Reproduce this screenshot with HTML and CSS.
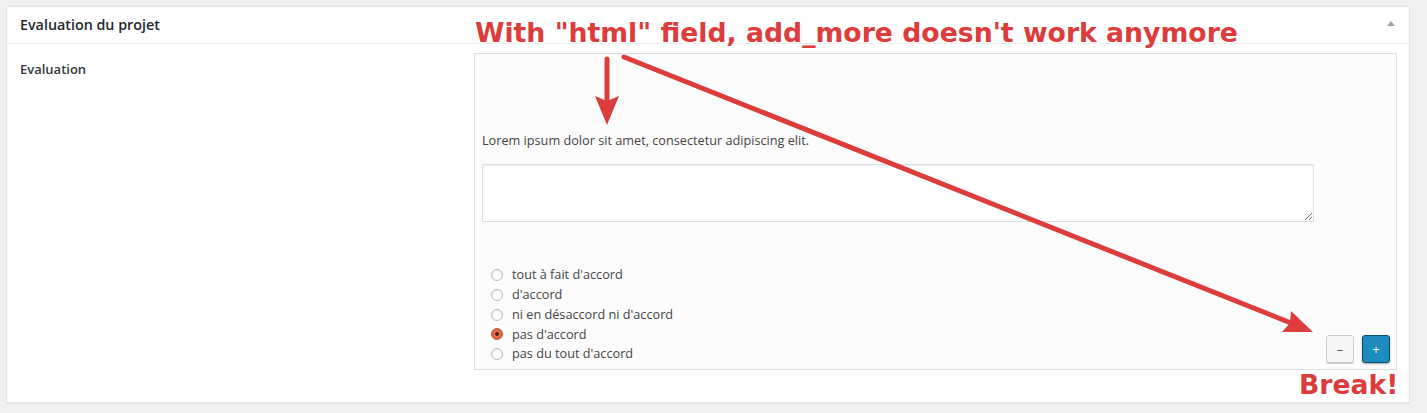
FILE: index.html
```html
<!DOCTYPE html>
<html lang="fr">
<head>
<meta charset="utf-8">
<title>Evaluation du projet</title>
<link rel="stylesheet" href="styles.css">
</head>
<body>
<div class="page">
  <div class="postbox">
    <div class="hndle">
      <h2 class="hndle-title">Evaluation du projet</h2>
      <span class="toggle"></span>
    </div>
    <div class="inside">
      <div class="label">Evaluation</div>
      <div class="field">
        <p class="desc">Lorem ipsum dolor sit amet, consectetur adipiscing elit.</p>
        <textarea class="textarea"></textarea>
        <div class="bottom">
          <ul class="radios">
            <li class="radio-row"><span class="radio"></span><span class="radio-label">tout à fait d'accord</span></li>
            <li class="radio-row"><span class="radio"></span><span class="radio-label">d'accord</span></li>
            <li class="radio-row"><span class="radio"></span><span class="radio-label">ni en désaccord ni d'accord</span></li>
            <li class="radio-row"><span class="radio checked"></span><span class="radio-label">pas d'accord</span></li>
            <li class="radio-row"><span class="radio"></span><span class="radio-label">pas du tout d'accord</span></li>
          </ul>
          <div class="buttons">
            <button class="btn btn-minus">–</button>
            <button class="btn btn-plus">+</button>
          </div>
        </div>
      </div>
    </div>
  </div>

  <div class="annot">
    <svg class="annot-svg" width="1427" height="413" viewBox="0 0 1427 413">
      <line x1="607" y1="59" x2="607" y2="100" stroke="#dd3c3c" stroke-width="5" stroke-linecap="round"/>
      <polygon points="595,96 607,101 619,96 607,125" fill="#dd3c3c"/>
      <line x1="624" y1="57" x2="1291" y2="323" stroke="#dd3c3c" stroke-width="5" stroke-linecap="round"/>
      <polygon points="1291,311 1313,332 1282,332 1290,323" fill="#dd3c3c"/>
    </svg>
    <div class="annot-title">With "html" field, add_more doesn't work anymore</div>
    <div class="annot-break">Break!</div>
  </div>
</div>
</body>
</html>
```

FILE: styles.css
```css
html, body {
  margin: 0;
  padding: 0;
}
body {
  background: #f1f1f1;
  font-family: "Open Sans", "Liberation Sans", sans-serif;
  font-size: 12.7px;
  color: #444;
}
.page {
  position: relative;
  width: 1427px;
  height: 413px;
  overflow: hidden;
  padding-top: 6px;
  box-sizing: border-box;
}
.postbox {
  margin: 0 17px 0 6px;
  background: #fff;
  border: 1px solid #e5e5e5;
  box-shadow: 0 1px 1px rgba(0,0,0,0.04);
}
.hndle {
  display: flex;
  align-items: center;
  justify-content: space-between;
  height: 36px;
  padding: 0 14px 0 13px;
  border-bottom: 1px solid #eee;
}
.hndle-title {
  margin: 0;
  font-size: 14.3px;
  font-weight: 600;
  color: #23282d;
  line-height: 36px;
}
.toggle {
  width: 0;
  height: 0;
  border-left: 4px solid transparent;
  border-right: 4px solid transparent;
  border-bottom: 5px solid #a0a5aa;
  margin-top: -3px;
}
.inside {
  display: grid;
  grid-template-columns: 467px 923px;
  padding: 9px 12px 32px 0;
}
.label {
  padding: 7px 0 0 13px;
  font-size: 13px;
  font-weight: 600;
  color: #32373c;
  line-height: 19.5px;
}
.field {
  background: #fcfcfc;
  border: 1px solid #dfdfdf;
  height: 317px;
  box-sizing: border-box;
  padding: 77px 6px 5px 7px;
  display: flex;
  flex-direction: column;
}
.desc {
  margin: 0;
  line-height: 19.5px;
  color: #444;
}
.textarea {
  display: block;
  margin-top: 13px;
  width: 832px;
  height: 58px;
  box-sizing: border-box;
  border: 1px solid #ddd;
  background: #fff;
  box-shadow: inset 0 1px 2px rgba(0,0,0,0.07);
  font-family: inherit;
  resize: vertical;
}
.bottom {
  margin-top: auto;
  display: flex;
  justify-content: space-between;
  align-items: flex-end;
}
.radios {
  list-style: none;
  margin: 0;
  padding: 0 0 0 9px;
}
.radio-row {
  display: flex;
  align-items: center;
  height: 19.75px;
}
.radio {
  width: 12px;
  height: 12px;
  box-sizing: border-box;
  border-radius: 50%;
  border: 1px solid #b4b9be;
  background: #fff;
  box-shadow: inset 0 1px 2px rgba(0,0,0,0.1);
  margin-right: 9px;
  flex: none;
}
.radio.checked {
  border-color: #c7552e;
  background: radial-gradient(circle, #4a2416 0, #4a2416 1.5px, #e4724a 2.2px, #d9603a 100%);
}
.radio-label {
  line-height: 19.75px;
  color: #444;
}
.buttons {
  display: flex;
  gap: 8px;
  margin-bottom: 1px;
}
.btn {
  width: 28px;
  height: 28px;
  padding: 0;
  border-radius: 3px;
  font-family: "Open Sans", "Liberation Sans", sans-serif;
  font-size: 13px;
  line-height: 26px;
  cursor: pointer;
}
.btn-minus {
  background: #f7f7f7;
  border: 1px solid #ccc;
  color: #555;
  box-shadow: 0 1px 0 #ccc;
}
.btn-plus {
  background: #1e8cbe;
  border: 1px solid #0b4f6f;
  color: #fff;
  box-shadow: 0 1px 2px rgba(0,0,0,0.35);
}
.annot {
  position: absolute;
  left: 0;
  top: 0;
  width: 1427px;
  height: 413px;
  pointer-events: none;
}
.annot-svg {
  position: absolute;
  left: 0;
  top: 0;
}
.annot-title,
.annot-break {
  position: absolute;
  font-family: "DejaVu Sans", sans-serif;
  font-weight: bold;
  font-size: 26.7px;
  line-height: 27px;
  color: #dd3c3c;
  white-space: nowrap;
}
.annot-title {
  left: 475px;
  top: 19px;
}
.annot-break {
  left: 1299px;
  top: 371px;
}
```
